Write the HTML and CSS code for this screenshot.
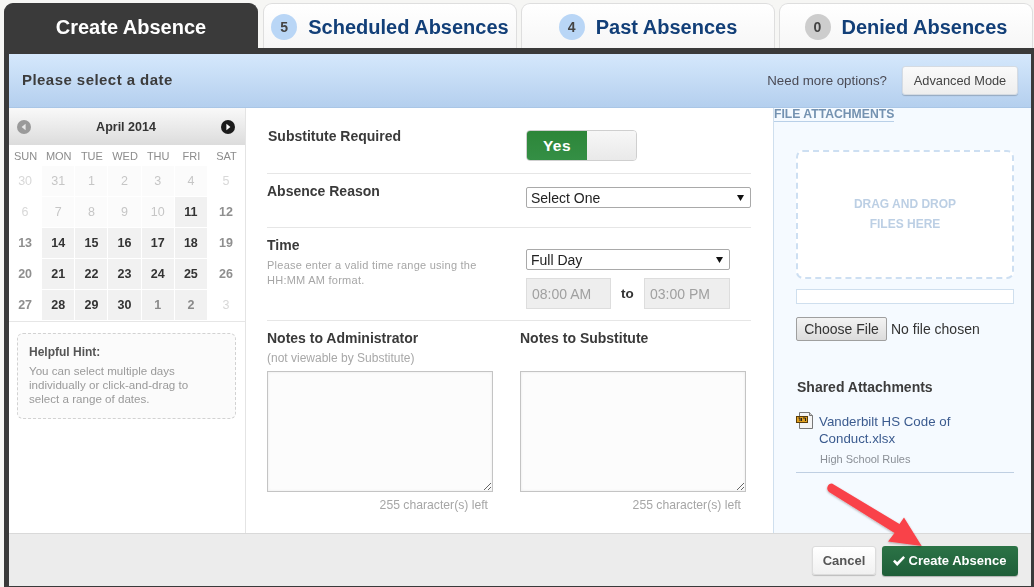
FILE: index.html
```html
<!DOCTYPE html>
<html lang="en">
<head>
<meta charset="utf-8">
<title>Create Absence</title>
<link rel="stylesheet" href="styles.css">
</head>
<body>
<div class="page">
  <nav class="tabs">
    <a class="tab tab-active">Create Absence</a>
    <a class="tab"><span class="count">5</span>Scheduled Absences</a>
    <a class="tab"><span class="count">4</span>Past Absences</a>
    <a class="tab"><span class="count count-none">0</span>Denied Absences</a>
  </nav>
  <main class="panel">
    <header class="bar">
      <h1 class="bar-title">Please select a date</h1>
      <span class="bar-ask">Need more options?</span>
      <button class="btn btn-adv">Advanced Mode</button>
    </header>
    <div class="cols">
      <section class="cal-col">
        <div class="cal-head">
          <svg class="cal-arrow" viewBox="0 0 14 14"><circle cx="7" cy="7" r="7" fill="#9a9a9a"/><path d="M8.6 3.8v6.4L4.6 7z" fill="#e8e8e8"/></svg>
          <span class="cal-title">April 2014</span>
          <svg class="cal-arrow" viewBox="0 0 14 14"><circle cx="7" cy="7" r="7" fill="#1c1c1c"/><path d="M5.4 3.8v6.4L9.4 7z" fill="#fff"/></svg>
        </div>
        <div class="cal-grid">
          <span class="dow">SUN</span><span class="dow">MON</span><span class="dow">TUE</span><span class="dow">WED</span><span class="dow">THU</span><span class="dow">FRI</span><span class="dow">SAT</span>
          <span class="d off">30</span><span class="d past">31</span><span class="d past">1</span><span class="d past">2</span><span class="d past">3</span><span class="d past">4</span><span class="d off">5</span>
          <span class="d off">6</span><span class="d past">7</span><span class="d past">8</span><span class="d past">9</span><span class="d past">10</span><span class="d on">11</span><span class="d end">12</span>
          <span class="d end">13</span><span class="d on">14</span><span class="d on">15</span><span class="d on">16</span><span class="d on">17</span><span class="d on">18</span><span class="d end">19</span>
          <span class="d end">20</span><span class="d on">21</span><span class="d on">22</span><span class="d on">23</span><span class="d on">24</span><span class="d on">25</span><span class="d end">26</span>
          <span class="d end">27</span><span class="d on">28</span><span class="d on">29</span><span class="d on">30</span><span class="d next">1</span><span class="d next">2</span><span class="d off">3</span>
        </div>
        <aside class="hint">
          <h2 class="hint-title">Helpful Hint:</h2>
          <p class="hint-text">You can select multiple days individually or click-and-drag to select a range of dates.</p>
        </aside>
      </section>
      <section class="form-col">
        <div class="row row-sub">
          <label class="label">Substitute Required</label>
          <div class="toggle"><span class="toggle-on">Yes</span><span class="toggle-off"></span></div>
        </div>
        <div class="row row-reason">
          <label class="label">Absence Reason</label>
          <select class="select select-wide"><option>Select One</option></select>
        </div>
        <div class="row row-time">
          <div class="time-left">
            <label class="label">Time</label>
            <p class="help">Please enter a valid time range using the HH:MM AM format.</p>
          </div>
          <div class="time-right">
            <select class="select select-time"><option>Full Day</option></select>
            <div class="time-range">
              <input class="time-input" value="08:00 AM" disabled>
              <span class="to">to</span>
              <input class="time-input" value="03:00 PM" disabled>
            </div>
          </div>
        </div>
        <div class="notes">
          <div class="note">
            <label class="label">Notes to Administrator</label>
            <p class="note-sub">(not viewable by Substitute)</p>
            <textarea class="note-area"></textarea>
            <p class="note-left">255 character(s) left</p>
          </div>
          <div class="note">
            <label class="label">Notes to Substitute</label>
            <p class="note-sub"></p>
            <textarea class="note-area"></textarea>
            <p class="note-left">255 character(s) left</p>
          </div>
        </div>
      </section>
      <section class="file-col">
        <h2 class="file-title">FILE ATTACHMENTS</h2>
        <div class="file-body">
          <div class="drop">DRAG AND DROP<br>FILES HERE</div>
          <div class="progress"></div>
          <input class="file" type="file">
          <h3 class="shared">Shared Attachments</h3>
          <div class="att">
            <svg class="att-icon" viewBox="0 0 18 18">
              <path d="M3.5 0.500h10l3 3v13h-13z" fill="#f4f4f4" stroke="#777"/>
              <path d="M13.500 0.500v3h3" fill="#ccc" stroke="#777"/>
              <rect x="0.500" y="4.500" width="11" height="6" fill="#e0a020" stroke="#5a3c08"/>
              <path d="M2.500 6h1.500v3M5.500 6v3M7 6h2.500v3" stroke="#222" fill="none"/>
            </svg>
            <a class="att-link">Vanderbilt HS Code of Conduct.xlsx</a>
          </div>
          <p class="att-desc">High School Rules</p>
        </div>
      </section>
    </div>
    <footer class="foot">
      <button class="btn btn-cancel">Cancel</button>
      <button class="btn btn-create"><svg class="check" viewBox="0 0 14 12"><path d="M1 6.500l1.800-1.800 2.400 2.400L11.300 1 13 2.800 5.200 11z" fill="#fff"/></svg>Create Absence</button>
    </footer>
  </main>
  <svg class="pointer" viewBox="0 0 1034 587">
    <defs>
      <filter id="arrow-shadow" x="-20%" y="-20%" width="140%" height="140%"><feDropShadow dx="0" dy="1" stdDeviation="1.200" flood-color="#000" flood-opacity="0.300"/></filter>
    </defs>
    <path d="M832 483.500 L899.500 524 L904 517.500 L921.700 546 L888 541.500 L894.500 533 L829 492 A4.800 4.800 0 0 1 832 483.500Z" fill="#f9434a" filter="url(#arrow-shadow)"/>
  </svg>
</div>
</body>
</html>
```
FILE: styles.css
```css
* { box-sizing: border-box; }
html, body { margin: 0; padding: 0; }
body { background: #f6f6f4; font-family: "Liberation Sans", Arial, sans-serif; color: #3a3a3a; overflow: hidden; }
h1, h2, h3, p { margin: 0; }
.page { position: relative; width: 1034px; height: 587px; padding-top: 3px; display: flex; flex-direction: column; filter: blur(0.35px); }

.tabs { display: flex; height: 45px; padding-left: 4px; gap: 4px; flex: none; }
.tab { width: 254px; display: flex; align-items: center; justify-content: center; padding-top: 2px; font-size: 20px; font-weight: bold; color: #123f78; background: linear-gradient(#fff, #f6f6f6); border: 1px solid #dedede; border-bottom: 0; border-radius: 9px 9px 0 0; }
.tab-active { margin-right: 1px; background: #3a3a3a; border-color: #3a3a3a; color: #fff; }
.count { width: 26px; height: 26px; border-radius: 50%; background: #b9d6f6; color: #444; font-size: 14px; display: flex; align-items: center; justify-content: center; margin-right: 11px; }
.count-none { background: #cdcdcd; }

.panel { margin-left: 4px; width: 1030px; height: 539px; border: solid #3a3a3a; border-width: 6px 3px 1px 5px; display: flex; flex-direction: column; background: #fff; }
.bar { height: 54px; flex: none; display: flex; align-items: center; padding: 0 13px; background: linear-gradient(#d5e8fc, #b4cfee); border-bottom: 1px solid #a9c6e6; }
.bar-title { font-size: 15px; font-weight: bold; color: #3c3c3c; margin: 0 auto 2px 0; letter-spacing: 0.45px; }
.bar-ask { font-size: 13.300px; color: #4b4b55; margin-right: 15px; }
.btn { font-family: inherit; border-radius: 3px; cursor: pointer; }
.btn-adv { width: 116px; height: 29px; font-size: 12.800px; color: #444; border: 1px solid #d5dbe2; background: linear-gradient(#fafafa, #eeeeee); box-shadow: 0 1px 1px rgba(0,0,0,.2); padding: 0; }

.cols { flex: 1; display: flex; min-height: 0; }
.cal-col { width: 237px; flex: none; border-right: 1px solid #e4e4e4; }
.cal-head { height: 37px; display: flex; align-items: center; justify-content: space-between; padding: 0 10px 0 8px; background: linear-gradient(#f9f9f9, #dcdcdc); }
.cal-arrow { width: 14px; height: 14px; }
.cal-title { font-size: 12.500px; font-weight: bold; color: #333; }
.cal-grid { display: grid; grid-template-columns: repeat(6, 33.170px) 37px; grid-template-rows: 20px repeat(5, 31px); height: 177px; padding-top: 1px; border-bottom: 1px solid #e6e6e6; }
.dow { font-size: 11px; color: #8c8c8c; display: flex; align-items: center; justify-content: center; }
.d { font-size: 12.500px; font-weight: bold; display: flex; align-items: center; justify-content: center; margin: 0 1px 1px 0; }
.off { color: #d8d8d8; font-weight: normal; }
.past { color: #c6c6c6; font-weight: normal; background: #fbfbfb; }
.end { color: #8f8f8f; font-weight: bold; }
.on { color: #333; background: #f1f1f1; }
.next { color: #8a8a8a; background: #f1f1f1; }
.hint { margin: 11px 9px 0 8px; height: 86px; border: 1px dashed #d2d2d2; border-radius: 6px; background: #fbfbfb; padding: 11px 24px 11px 11px; }
.hint-title { font-size: 12px; font-weight: bold; color: #555; margin-bottom: 5px; line-height: 14px; }
.hint-text { font-size: 11.600px; line-height: 14px; color: #9a9a9a; }

.form-col { width: 527px; flex: none; padding: 0 22px 0 21px; }
.row { display: flex; border-bottom: 1px solid #e6e6e6; }
.label { font-size: 14px; font-weight: bold; color: #3a3a3a; line-height: 16px; display: block; }
.row-sub { height: 66px; padding-top: 20px; }
.row-sub .label { width: 259px; padding-left: 1px; }
.toggle { display: flex; width: 111px; height: 31px; margin-top: 2px; border: 1px solid #cfcfcf; border-radius: 4px; overflow: hidden; }
.toggle-on { width: 60px; background: linear-gradient(#2d8639, #348f45); color: #fff; font-size: 15.500px; font-weight: bold; display: flex; align-items: center; justify-content: center; letter-spacing: .5px; }
.toggle-off { flex: 1; background: linear-gradient(#f7f7f7, #e9e9e9); }
.row-reason { height: 54px; padding-top: 9px; }
.row-reason .label { width: 259px; }
.select { appearance: none; font-family: inherit; font-size: 14px; color: #222; background: #fff url("data:image/svg+xml,%3Csvg xmlns='http://www.w3.org/2000/svg' width='7' height='6'%3E%3Cpath d='M0 0h7L3.500 6z' fill='%23111'/%3E%3C/svg%3E") no-repeat right 6px center; border: 1px solid #a9a9a9; border-radius: 2px; height: 21px; padding: 0 0 0 4px; }
.select-wide { width: 225px; margin-top: 4px; }
.row-time { height: 93px; padding-top: 9px; }
.time-left { width: 259px; }
.help { font-size: 11px; line-height: 15px; color: #a6a6a6; margin-top: 5px; width: 225px; letter-spacing: .25px; }
.time-right { width: 225px; padding-top: 12px; }
.select-time { width: 204px; display: block; }
.time-range { display: flex; align-items: center; margin-top: 8px; }
.time-input { width: 85px; height: 31px; border: 1px solid #dddddd; background: #eeeeee; color: #a0a0a0; font-family: inherit; font-size: 14px; padding: 0 5px; opacity: 1; }
.to { width: 33px; padding-left: 10px; font-size: 13.500px; font-weight: bold; color: #333; }
.time-range .time-input:last-child { width: 86px; }
.notes { display: flex; gap: 27px; padding-top: 9px; }
.note { width: 226px; }
.note-sub { height: 13px; margin: 6px 0 6px; font-size: 12px; line-height: 13px; color: #a8a8a8; }
.note-area { display: block; width: 226px; height: 121px; border: 1px solid #c4c4c4; background: #fcfcfc; box-shadow: inset 0 0 3px rgba(0,0,0,.08); padding: 2px; margin: 0; }
.note-left { font-size: 12.200px; color: #a6a6a6; line-height: 13px; margin-top: 7px; text-align: right; padding-right: 5px; }

.file-col { flex: 1; background: #f5faff; border-left: 1px solid #cfdfee; }
.file-title { display: block; width: fit-content; font-size: 12.200px; font-weight: bold; line-height: 13px; color: #7492b1; border-bottom: 1px solid #b9d0e8; }
.file-body { padding: 28px 17px 0 22px; }
.drop { height: 129px; border: 2px dashed #cddff2; border-radius: 7px; background: #fff; font-size: 12px; font-weight: bold; line-height: 20px; color: #bccfe4; text-align: center; padding-top: 42px; }
.progress { height: 15px; margin-top: 10px; background: #fff; border: 1px solid #cfdfee; }
.file { display: block; margin-top: 13px; height: 24px; width: 218px; font-family: inherit; font-size: 14px; color: #333; }
.file::file-selector-button { font-family: inherit; font-size: 14px; height: 24px; width: 91px; margin-right: 4px; padding: 0; color: #333; background: linear-gradient(#f3f3f3, #dcdcdc); border: 1px solid #9f9f9f; border-radius: 2px; }
.shared { font-size: 14px; font-weight: bold; line-height: 16px; color: #3c3c3c; margin-top: 38px; padding-left: 1px; }
.att { display: flex; margin-top: 18px; }
.att-icon { width: 18px; height: 18px; flex: none; margin-right: 5px; margin-top: -1px; }
.att-link { font-size: 13.300px; line-height: 17px; color: #3b5b8f; width: 150px; }
.att-desc { font-size: 11px; line-height: 13px; color: #8a8f96; margin-top: 6px; padding: 0 0 6px 24px; border-bottom: 1px solid #bfcfe2; }

.foot { height: 53px; flex: none; display: flex; align-items: center; justify-content: flex-end; gap: 6px; padding: 1px 13px 0 0; background: #ececec; border-top: 1px solid #d9d9d9; }
.btn-cancel { width: 64px; height: 29px; padding: 0; font-size: 13px; font-weight: bold; color: #555; background: linear-gradient(#fff, #f1f1f1); border: 1px solid #dcdcdc; box-shadow: 0 1px 1px rgba(0,0,0,.2); }
.btn-create { width: 136px; height: 30px; padding: 0 2px 0 0; display: flex; align-items: center; justify-content: center; font-size: 13px; font-weight: bold; color: #fff; background: linear-gradient(#2b7346, #1f5e39); border: 0; box-shadow: 0 1px 1px rgba(0,0,0,.25); }
.check { width: 14px; height: 12px; margin-right: 3px; }
.pointer { position: absolute; left: 0; top: 0; width: 1034px; height: 587px; pointer-events: none; }
```
